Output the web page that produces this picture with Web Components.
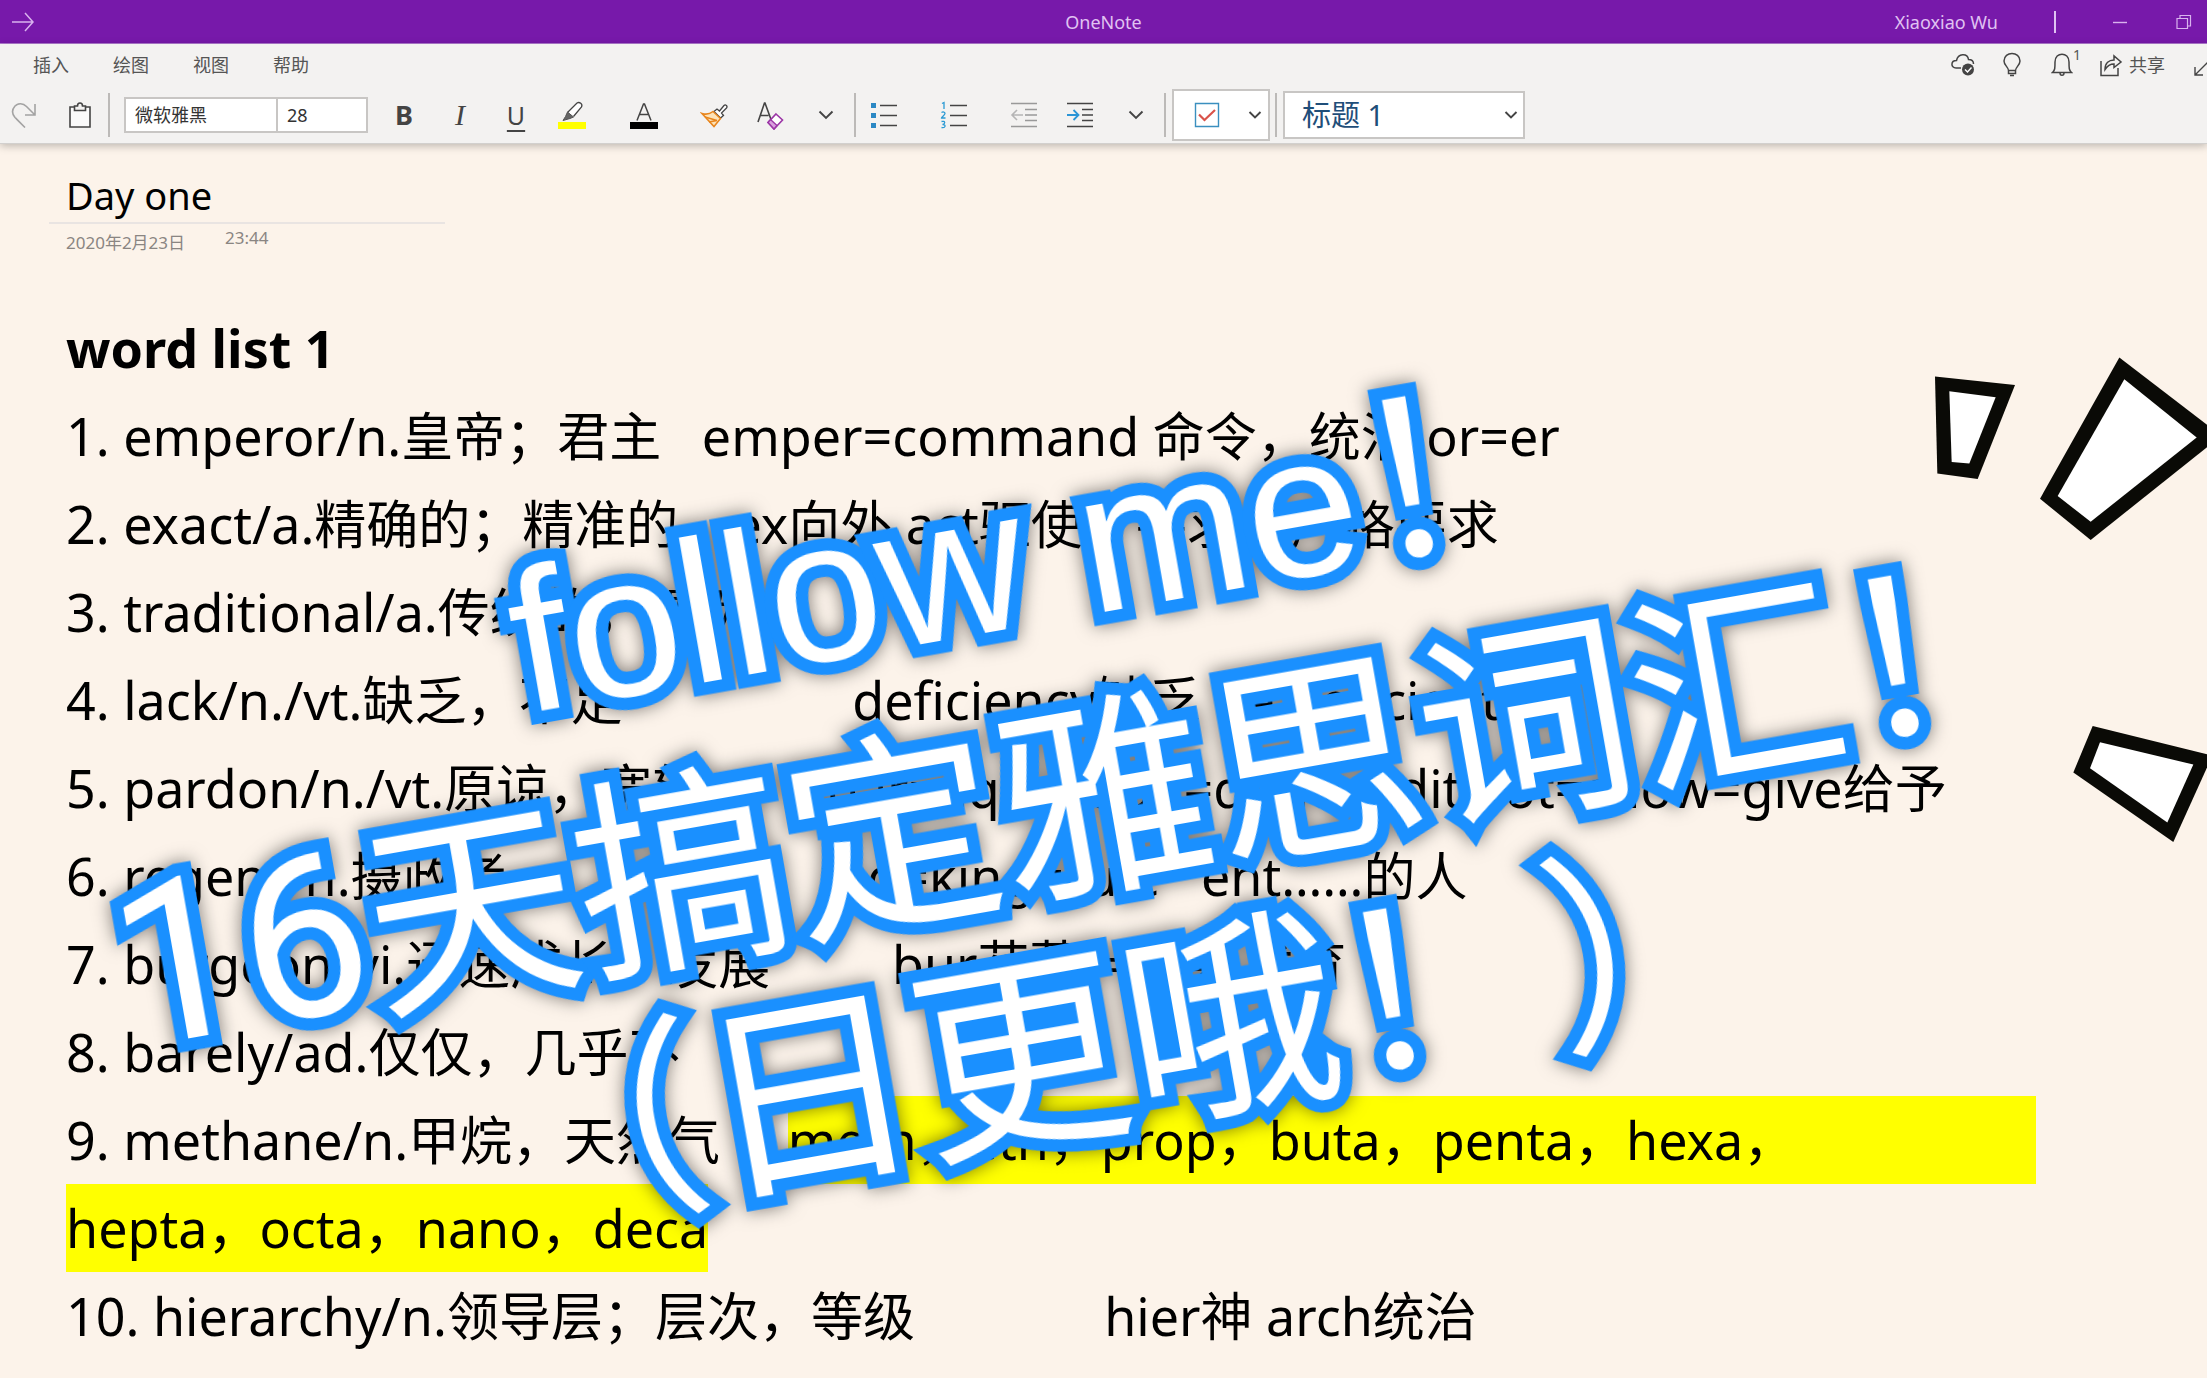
<!DOCTYPE html>
<html lang="zh-CN">
<head>
<meta charset="utf-8">
<title>OneNote</title>
<style>
html, body { margin: 0; min-height: 100vh; }
body {
  font-family: "Noto Sans", "Noto Sans CJK SC", sans-serif;
  background: #fcf3ea;
  color: #000;
}
</style>
</head>
<body>
<note-app></note-app>
<script>
const define = (name, html, setup) => {
  const template = document.createElement('template');
  template.innerHTML = html;
  customElements.define(name, class extends HTMLElement {
    constructor() {
      super();
      this.attachShadow({ mode: 'open' }).append(template.content.cloneNode(true));
    }
    connectedCallback() { if (setup) setup(this, this.shadowRoot); }
  });
};

/* ---------- icons ---------- */
const svg = (w, h, body) => `<svg width="${w}" height="${h}" viewBox="0 0 ${w} ${h}" fill="none" stroke="#444" stroke-width="1.6">${body}</svg>`;
const icons = {
  forward: svg(24, 24, '<path stroke="#d9b3ee" stroke-width="1.5" d="M1 12H22M14 3L22 12L14 21"/>'),
  minimize: svg(16, 16, '<path stroke="#d9b3ee" stroke-width="1.4" d="M1 8.5H15"/>'),
  restore: svg(16, 16, '<path stroke="#d9b3ee" stroke-width="1.2" d="M1 4.500H11.500V14.500H1ZM4 4.500V1.500H14.500V12H11.500"/>'),
  redo: svg(26, 26, '<path stroke="#a3a3a3" d="M24 2V13H14M23.500 12.500L15.500 4.500C12 1 7 1 4 4C1 7.500 1 12 4 15.500L14 25.500"/>'),
  clipboard: svg(24, 28, '<path fill="#fafafa" d="M2 6H22V26H2Z"/><path fill="#f3f2f1" d="M6.500 9.500V5H9.500C9.500 1 14.500 1 14.500 5H17.500V9.500Z"/>'),
  highlighter: svg(30, 28, '<path fill="#ff0" stroke="none" d="M1 21H29V28H1Z"/><path fill="#fff" stroke-width="1.3" d="M10.500 11.500L20 2C22.500 0.500 26 3 24.500 6L16.500 15.500"/><path fill="#666" stroke="#555" stroke-width="1" d="M10.500 11L16.500 16L13 17.500L6 19.500L8.500 15.500Z"/>'),
  fontcolor: svg(30, 28, '<path fill="#000" stroke="none" d="M1 21H29V28H1Z"/><path stroke-width="1.5" d="M8 19.500L14.500 3L15.500 3L22 19.500M10.500 13.500H19.500"/>'),
  brush: svg(28, 26, '<path fill="#fff" stroke-width="1.3" d="M14 9.500L17 7L19.500 9L24 3.500C25.500 2 28 4 26.500 6L21.500 11L23.500 13.500L20.500 16Z"/><path fill="#fde3b8" stroke="#e8851c" stroke-width="1.5" d="M13 9.500L20.500 16.500L14 24.500L2 11.500C7 13 10 12 13 9.500Z"/><path stroke="#e8851c" stroke-width="1.500" d="M5 15L17 18.500M9 20L17 18.500"/>'),
  eraser: svg(28, 30, '<path stroke-width="1.6" d="M2 22L8.500 3L9 3L15 19.500M4.500 15.500H12.500"/><path fill="#fff" stroke="#9b35a6" stroke-width="1.6" d="M20 14L26.500 20L18 29L12 22.500Z"/><path fill="#d9a0de" stroke="#9b35a6" stroke-width="1.4" d="M14.500 19.500L21 25.500L18 29L12 22.500Z"/>'),
  chevron: svg(16, 10, '<path stroke-width="1.9" d="M1.500 1.500L8 8L14.500 1.500"/>'),
  chevronSmall: svg(14, 10, '<path stroke-width="1.9" d="M1.500 2L7 7.500L12.500 2"/>'),
  bullets: svg(28, 28, '<path fill="#2b88c4" stroke="none" d="M1 2H6V7H1ZM1 12H6V17H1ZM1 22H6V27H1Z"/><path stroke-width="1.5" d="M10 4.500H27M10 14.500H27M10 24.500H27"/>'),
  numbers: svg(28, 28, '<path stroke="#2b9ad4" stroke-width="1.3" d="M2 2.500L4 1.500V8M1.500 11.500C3 10.500 5 11 5 12.500C5 14 1.500 16 1.500 17H5.500M1.500 20.500C5.500 19.500 5.500 23 2.500 23.500C6.500 23.500 5.500 27.500 1.500 26.500"/><path stroke-width="1.500" d="M10 4.500H27M10 14.500H27M10 24.500H27"/>'),
  outdent: svg(28, 28, '<path stroke="#999" stroke-width="1.3" d="M1 2.500H27M15 8.500H27M15 14H27M15 19.500H27M1 25.500H27"/><path stroke="#b5b5b5" stroke-width="1.6" d="M13 14H2M7 9L2 14L7 19"/>'),
  indent: svg(28, 28, '<path stroke-width="1.5" d="M1 2.500H27M16 8.500H27M16 14H27M16 19.500H27M1 25.500H27"/><path stroke="#2b95d6" stroke-width="1.8" d="M1 14H12M7.500 9L12.500 14L7.500 19"/>'),
  todo: svg(26, 26, '<path fill="#fff" stroke="#3a8fbf" stroke-width="1.4" d="M1.500 1.500H24.500V24.500H1.500Z"/><path stroke="#d9534a" stroke-width="2.2" d="M5 12.500L10.500 18L21 8"/>'),
  cloud: svg(26, 26, '<path stroke-width="1.500" d="M11 16H6C0.500 16 0.500 8.500 6.500 8.500C8 1 17.500 1 18.500 7.500C21.500 7.500 23.500 9 23.500 12"/><circle cx="18" cy="17.500" r="6" fill="#444" stroke="none"/><path stroke="#fff" stroke-width="1.400" d="M15 17.500L17.500 20L21.500 15.500"/>'),
  bulb: svg(20, 26, '<path stroke-width="1.500" d="M6.500 18.500C6.500 15 2 13.500 2 9C2 -1 18 -1 18 9C18 13.500 13.500 15 13.500 18.500ZM6.500 18.500V21.500H13.500V18.500M8 23.500H12"/>'),
  bell: svg(22, 26, '<path stroke-width="1.5" d="M1.500 20.500C4 18.500 4 16 4 10C4 -0.500 18 -0.500 18 10C18 16 18 18.500 20.500 20.500ZM9 21C9 24 13 24 13 21"/>'),
  share: svg(24, 24, '<path stroke-width="1.5" d="M2 8V22.500H19V15M6 16.500C6 10 10 7 15 7V3L22 9L15 14.500V11C11 11 8.500 12.500 6 16.500Z"/>'),
  expand: svg(22, 24, '<path stroke-width="1.400" d="M2 14V22H10M2 22L22 2"/>')
};

define('ui-icon', '<style>:host{display:inline-flex}svg{display:block}</style><span></span>', (el, root) => {
  root.querySelector('span').innerHTML = icons[el.getAttribute('name')];
});

define('tool-button', `
<style>
:host { display: block; flex: none; width: 56px; }
:host([spaced]) { margin-left: 14px; }
button { all: unset; box-sizing: border-box; width: 100%; height: 56px; display: flex; align-items: center; justify-content: center; color: #444; font-size: 27px; cursor: pointer; }
</style>
<button><slot></slot></button>`, (el, root) => {
  root.querySelector('button').setAttribute('aria-label', el.getAttribute('label') || '');
});

define('tool-separator', '<style>:host{display:block;flex:none;width:2px;height:44px;background:#bcbab8}</style>');

define('title-bar', `
<style>
:host { display: grid; grid-template-columns: 1fr auto 1fr; align-items: center; height: 44px; box-sizing: border-box; background: #7719aa; border-bottom: 1px solid #b07ad0; color: #e0c2f2; font-size: 18px; line-height: 24px; }
button { all: unset; display: flex; cursor: pointer; }
.back { margin-left: 11px; }
.right { display: flex; align-items: center; justify-content: flex-end; padding-right: 15px; }
.bar { width: 2px; height: 22px; background: #e0c2f2; margin: 0 56px; }
.min { margin-right: 48px; }
</style>
<button class="back" aria-label="前进"><ui-icon name="forward"></ui-icon></button>
<span>OneNote</span>
<div class="right"><span>Xiaoxiao Wu</span><span class="bar"></span>
<button class="min" aria-label="最小化"><ui-icon name="minimize"></ui-icon></button>
<button aria-label="还原"><ui-icon name="restore"></ui-icon></button></div>`);

define('menu-row', `
<style>
:host { display: flex; justify-content: space-between; align-items: center; height: 42px; font-size: 18px; line-height: 24px; color: #555; }
nav { display: flex; gap: 44px; padding-left: 33px; }
a { color: inherit; text-decoration: none; }
.actions { display: flex; align-items: center; }
button { all: unset; display: flex; align-items: center; cursor: pointer; }
.cloud { margin-right: 26px; } .bulb { margin-right: 29px; }
.bell { margin-right: 18px; }
sup { font-size: 14px; line-height: 14px; align-self: flex-start; width: 8px; margin-top: -4px; }
.share { gap: 6px; margin-right: 28px; }
.expand { width: 14px; overflow: hidden; }
</style>
<nav><a href="#insert">插入</a><a href="#draw">绘图</a><a href="#view">视图</a><a href="#help">帮助</a></nav>
<div class="actions">
<button class="cloud" aria-label="同步"><ui-icon name="cloud"></ui-icon></button>
<button class="bulb" aria-label="提示"><ui-icon name="bulb"></ui-icon></button>
<button class="bell" aria-label="通知"><ui-icon name="bell"></ui-icon><sup>1</sup></button>
<button class="share"><ui-icon name="share"></ui-icon>共享</button>
<button class="expand" aria-label="全屏"><ui-icon name="expand"></ui-icon></button>
</div>`);

define('tool-row', `
<style>
:host { display: flex; align-items: center; height: 57px; overflow: hidden; }
.first { display: flex; margin-left: -4px; }
.fonts { display: flex; flex: none; margin: 0 8px 0 14px; width: 244px; height: 36px; box-sizing: border-box; border: 2px solid #c8c6c4; background: #fff; }
input { min-width: 0; box-sizing: border-box; border: 0; margin: 0; padding: 0 9px; background: #fff; color: #333; font: 18px/32px "Noto Sans", "Noto Sans CJK SC", sans-serif; outline: 0; }
.family { flex: 1; } .size { width: 90px; border-left: 2px solid #c8c6c4; }
.wide { margin-left: 16px; }
.tag { all: unset; flex: none; box-sizing: border-box; display: flex; align-items: center; justify-content: space-between; width: 98px; height: 52px; margin: 0 5px 0 6px; padding: 0 6px 0 20px; border: 2px solid #c8c6c4; background: #fff; }
.style { flex: none; display: grid; align-items: center; width: 242px; height: 48px; box-sizing: border-box; margin-left: 6px; border: 2px solid #c8c6c4; background: #fff; }
select, .style ui-icon { grid-area: 1 / 1; }
select { appearance: none; width: 100%; height: 44px; border: 0; margin: 0; padding: 0 17px; background: none; color: #1f4e79; font: 29px/40px "Noto Sans", "Noto Sans CJK SC", sans-serif; }
.style ui-icon { justify-self: end; margin-right: 5px; pointer-events: none; }
b { font-weight: 700; } i { font-family: "Liberation Serif", serif; font-size: 30px; }
u { text-underline-offset: 5px; text-decoration-thickness: 2px; font-size: 25px; }
</style>
<div class="first"><tool-button label="恢复"><ui-icon name="redo"></ui-icon></tool-button><tool-button label="粘贴"><ui-icon name="clipboard"></ui-icon></tool-button></div>
<tool-separator></tool-separator>
<div class="fonts"><input class="family" aria-label="字体" value="微软雅黑"><input class="size" aria-label="字号" value="28"></div>
<tool-button label="加粗"><b>B</b></tool-button>
<tool-button label="倾斜"><i>I</i></tool-button>
<tool-button label="下划线"><u>U</u></tool-button>
<tool-button label="突出显示"><ui-icon name="highlighter"></ui-icon></tool-button>
<tool-button class="wide" label="字体颜色"><ui-icon name="fontcolor"></ui-icon></tool-button>
<tool-button spaced label="格式刷"><ui-icon name="brush"></ui-icon></tool-button>
<tool-button label="清除格式"><ui-icon name="eraser"></ui-icon></tool-button>
<tool-button label="更多字体选项"><ui-icon name="chevron"></ui-icon></tool-button>
<tool-separator></tool-separator>
<tool-button label="项目符号"><ui-icon name="bullets"></ui-icon></tool-button>
<tool-button spaced label="编号"><ui-icon name="numbers"></ui-icon></tool-button>
<tool-button spaced label="减少缩进"><ui-icon name="outdent"></ui-icon></tool-button>
<tool-button label="增加缩进"><ui-icon name="indent"></ui-icon></tool-button>
<tool-button label="更多段落选项"><ui-icon name="chevron"></ui-icon></tool-button>
<tool-separator></tool-separator>
<button class="tag" aria-label="待办事项"><ui-icon name="todo"></ui-icon><ui-icon name="chevronSmall"></ui-icon></button>
<tool-separator></tool-separator>
<div class="style"><select aria-label="样式"><option>标题 1</option></select><ui-icon name="chevronSmall"></ui-icon></div>`);

define('word-line', `
<style>
:host { display: flex; height: 88px; line-height: 88px; font-size: 52px; white-space: pre; }
:host([heading]) { font-weight: 700; }
::slotted(mark) { background: #ff0; color: #000; }
::slotted(mark[fill]) { flex: 1; }
</style>
<slot></slot>`);

define('note-page', `
<style>
:host { display: block; padding: 26px 171px 0 66px; box-sizing: border-box; }
header { width: 396px; margin-left: -17px; }
h1 { margin: 0; padding: 0 17px 2px; font-weight: 400; font-size: 38px; line-height: 50px; border-bottom: 2px solid #e9e4e2; }
.stamp { display: flex; gap: 40px; padding: 2px 17px 0; color: #8a8582; font-size: 17px; line-height: 24px; }
.date { padding-top: 5px; }
main { margin-top: 49px; }
</style>
<header><h1>Day one</h1><div class="stamp"><span class="date">2020年2月23日</span><time>23:44</time></div></header>
<main>
<word-line heading><span>word list 1</span></word-line>
<word-line><span>1. emperor/n.皇帝；君主   emper=command 命令，统治 or=er</span></word-line>
<word-line><span>2. exact/a.精确的；精准的    ex向外 act驱使，寻求，严格要求</span></word-line>
<word-line><span>3. traditional/a.传统的，惯例</span></word-line>
<word-line><span>4. lack/n./vt.缺乏，不足                 deficiency缺乏 be deficient in</span></word-line>
<word-line><span>5. pardon/n./vt.原谅，宽恕         par=equal don=done=edit=lot=allow=give给予</span></word-line>
<word-line><span>6. regent/n.摄政者                       reg=king=rule   ent……的人</span></word-line>
<word-line><span>7. burgeon/vi.迅速成长，发展         bur花蕾 =萌芽 发育</span></word-line>
<word-line><span>8. barely/ad.仅仅，几乎不</span></word-line>
<word-line><span>9. methane/n.甲烷，天然气     </span><mark fill>meth，eth，prop，buta，penta，hexa，</mark></word-line>
<word-line><mark>hepta，octa，nano，deca</mark></word-line>
<word-line><span>10. hierarchy/n.领导层；层次，等级              hier神 arch统治</span></word-line>
</main>`);

define('burst-marks', `
<style>:host { display: block; position: absolute; top: 330px; right: 0; width: 327px; height: 540px; overflow: hidden; } svg { display: block; }</style>
<svg width="327" height="540" viewBox="0 0 981 1620"><g transform="scale(1 1.033)">
<g fill="#0a0a06"><path d="M165 135L405 160L293 433L172 417Z"/><path d="M718 80L1024 307L632 610L480 490Z"/><path d="M638 1150L997 1236L880 1487L580 1285Z"/></g>
<g fill="#fff"><path d="M208 178L347 195L268 388L215 383Z"/><path d="M733 143L950 312L632 557L533 482Z"/><path d="M660 1197L940 1262L862 1430L630 1273Z"/></g>
</g></svg>`);

define('cover-caption', `
<style>
:host { display: block; position: absolute; left: calc(50% - 22px); top: 792px; transform: translate(-50%, -50%) rotate(-10deg); pointer-events: none; filter: drop-shadow(0 0 9px rgba(0, 0, 0, .5)); }
p { margin: 0; text-align: center; white-space: pre; font: 400 214px/240px Inter, "Noto Sans CJK SC", sans-serif; color: #fff; -webkit-text-stroke: 25px #1a90ff; paint-order: stroke fill; }
.lead { padding-bottom: 14px; }
.latin { font-family: "Liberation Sans", sans-serif; font-size: 203px; }
.digits { font-family: Roboto, sans-serif; font-size: 226px; }
</style>
<p class="lead"><span class="latin">follow me</span>！</p>
<p><span class="digits">16</span>天搞定雅思词汇！</p>
<p>（日更哦！）</p>`);

define('note-app', `
<style>
:host { display: block; position: relative; min-height: 100vh; overflow: hidden; }
.ribbon { position: relative; background: #f3f2f1; border-bottom: 1px solid #d2d0ce; box-shadow: 0 2px 8px rgba(0, 0, 0, .25); }
</style>
<title-bar></title-bar>
<div class="ribbon"><menu-row></menu-row><tool-row></tool-row></div>
<note-page></note-page>
<burst-marks></burst-marks>
<cover-caption></cover-caption>`);
</script>
</body>
</html>
